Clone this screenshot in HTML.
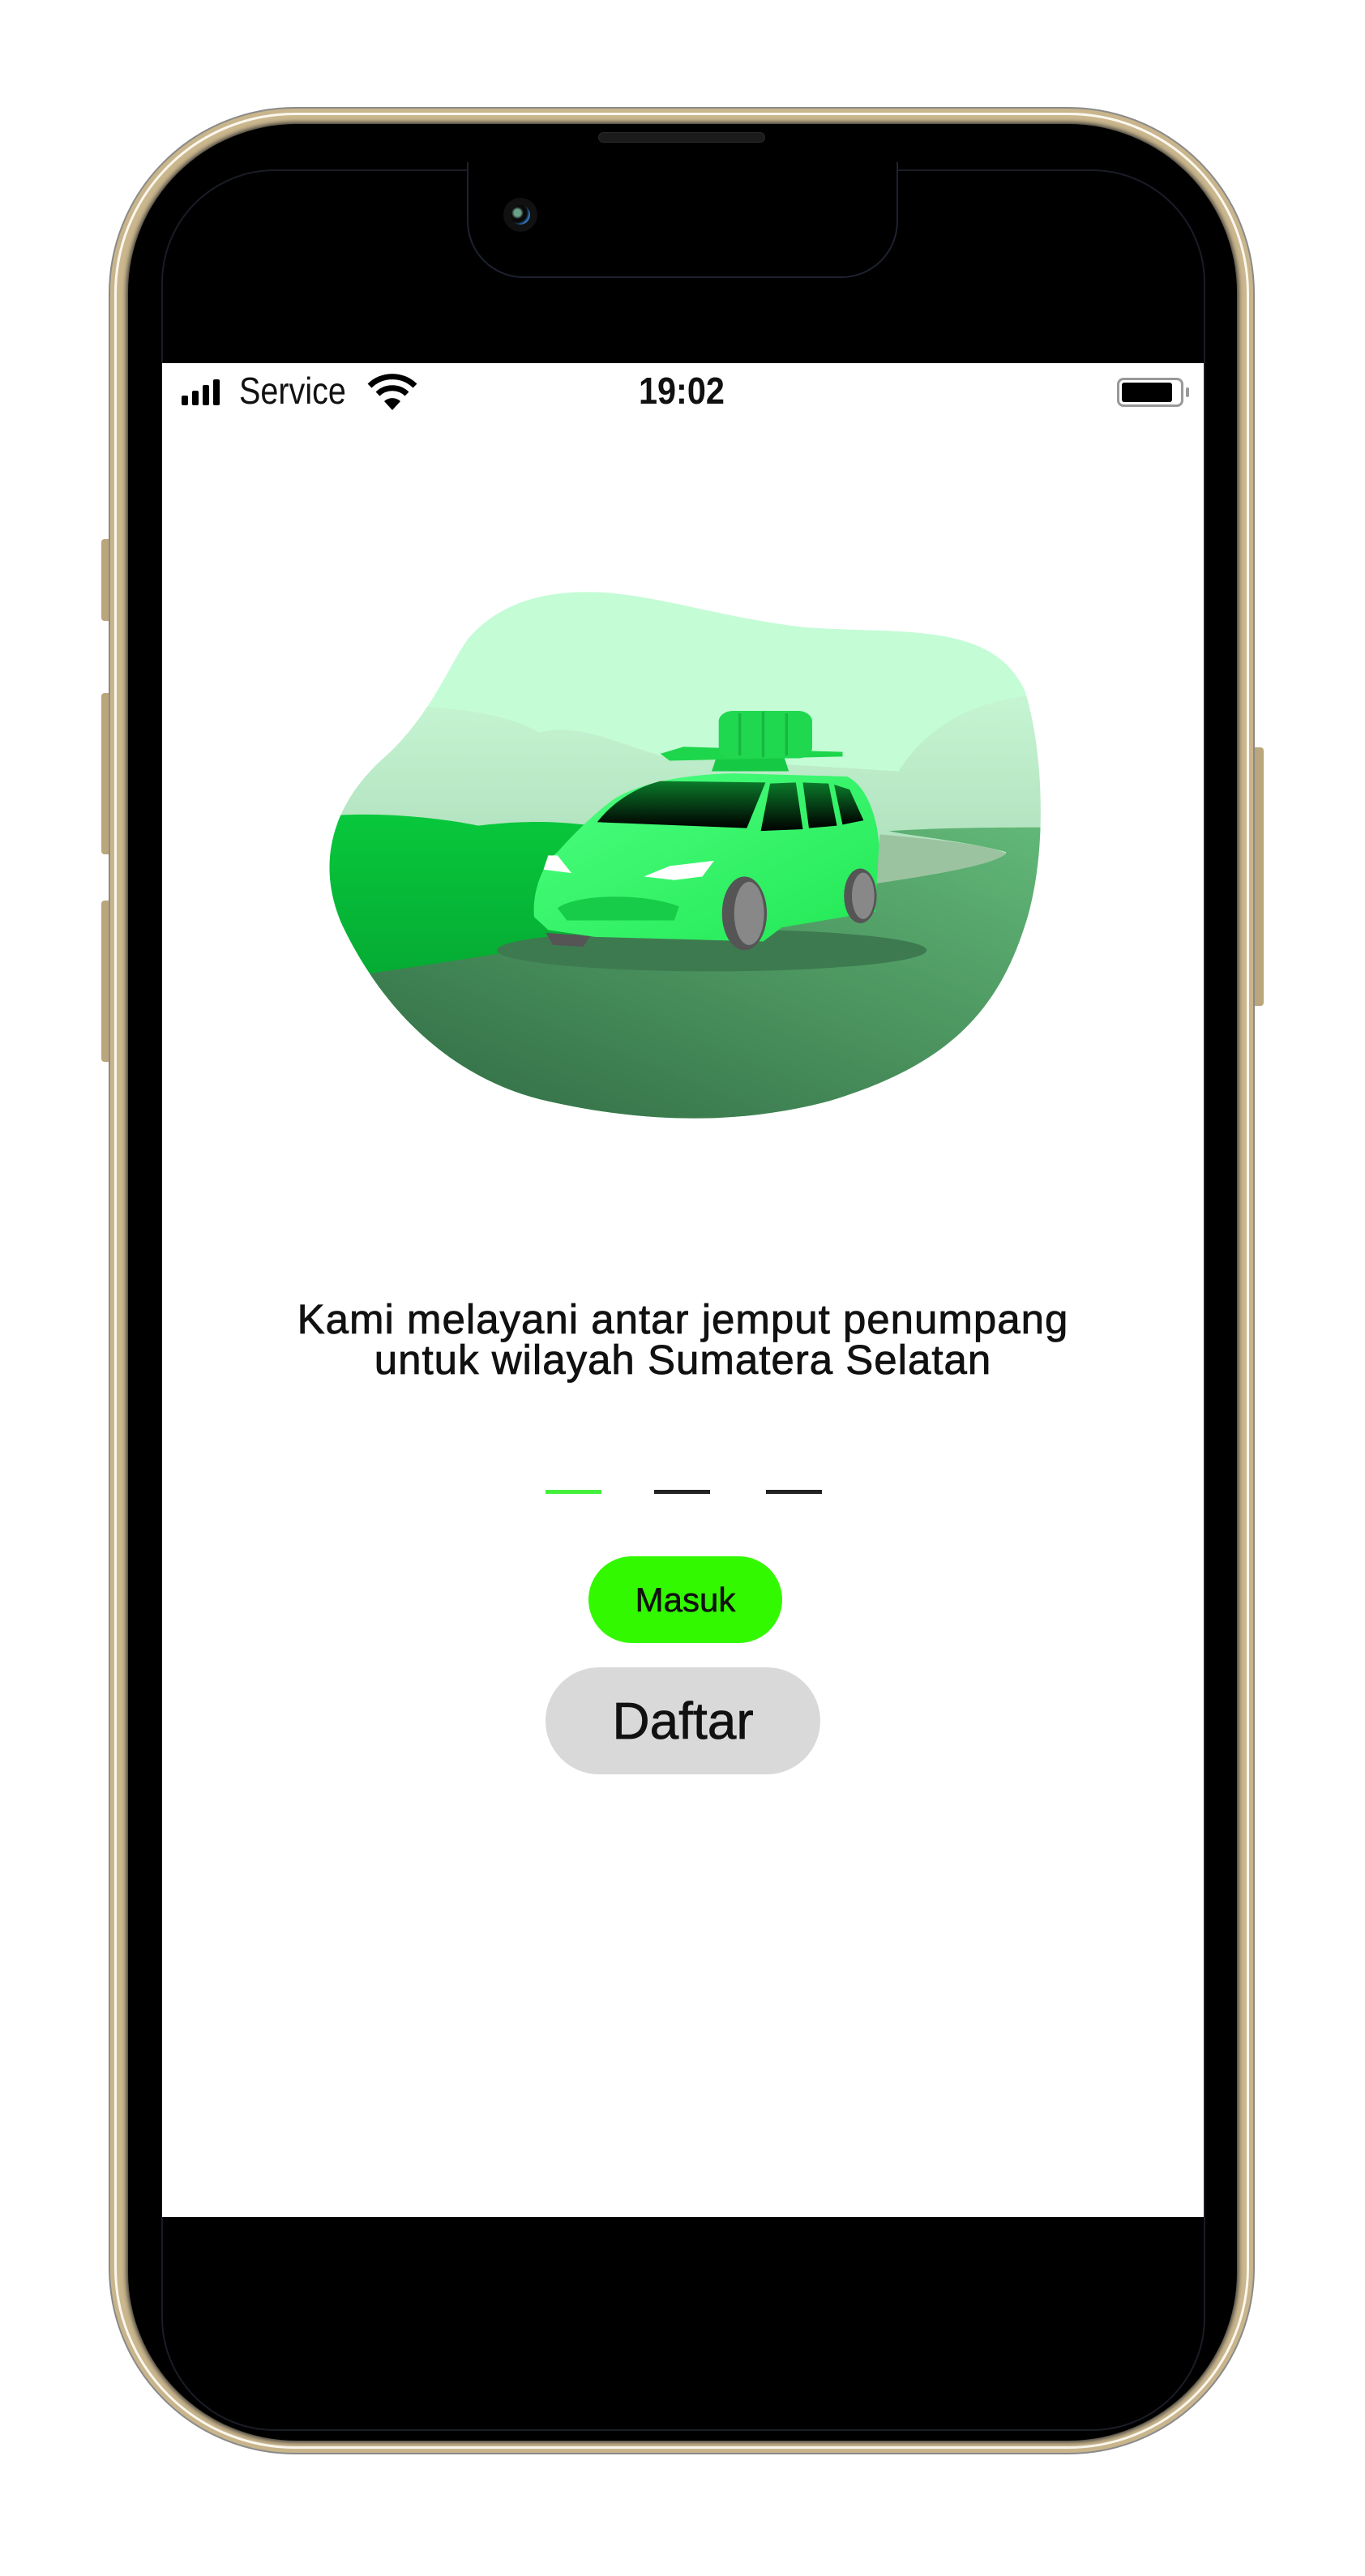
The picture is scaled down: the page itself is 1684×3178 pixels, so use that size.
<!DOCTYPE html>
<html><head><meta charset="utf-8">
<style>
*{margin:0;padding:0;box-sizing:border-box}
html,body{width:1684px;height:3178px;background:#fff;overflow:hidden;font-family:"Liberation Sans",sans-serif}
.abs{position:absolute}
.txt{position:absolute;left:200px;width:1285px;text-align:center;font-size:51px;line-height:50px;color:#111;-webkit-text-stroke:0.8px #111;letter-spacing:1px}
</style></head><body>
<!-- side buttons -->
<div class="abs" style="left:125px;top:665px;width:14px;height:101px;background:#b9a67d;border-radius:4px"></div>
<div class="abs" style="left:125px;top:855px;width:14px;height:199px;background:#b9a67d;border-radius:4px"></div>
<div class="abs" style="left:125px;top:1111px;width:14px;height:199px;background:#b9a67d;border-radius:4px"></div>
<div class="abs" style="left:1545px;top:922px;width:14px;height:319px;background:#b9a67d;border-radius:4px"></div>
<!-- frame -->
<div class="abs" style="left:134px;top:132px;width:1414px;height:2896px;border-radius:230px;background:#c9b58c;border:2px solid #8a8a8a"></div>
<div class="abs" style="left:141px;top:139px;width:1400px;height:2882px;border-radius:223px;background:#cbb78e;border:3px solid #fbf7ee"></div>
<div class="abs" style="left:158px;top:153px;width:1368px;height:2858px;border-radius:208px;background:#000;box-shadow:0 0 6px 2px #333"></div>
<div class="abs" style="left:199px;top:209px;width:1288px;height:2790px;border-radius:140px;border:2px solid #1a1d26"></div>
<!-- notch -->
<div class="abs" style="left:576px;top:200px;width:532px;height:143px;background:#000;border:2px solid #1e2230;border-top:none;border-radius:0 0 70px 70px"></div>
<div class="abs" style="left:738px;top:163px;width:206px;height:13px;border-radius:7px;background:#1b1b1b;border:1px solid #2a2a2a"></div>
<div class="abs" style="left:621px;top:244px;width:42px;height:42px;border-radius:50%;background:#111"></div>
<div class="abs" style="left:630px;top:253px;width:24px;height:24px;border-radius:50%;background:radial-gradient(circle at 35% 40%,#6aa08a 0 20%,#0a0a0a 35%,#0a0a0a 55%,#2c73b8 70%)"></div>
<!-- screen -->
<div class="abs" style="left:200px;top:448px;width:1285px;height:2287px;background:#fff"></div>
<!-- status bar -->
<svg class="abs" style="left:224px;top:466px" width="60" height="36"><rect x="0" y="22" width="8" height="12" rx="2"/><rect x="13" y="16" width="8" height="18" rx="2"/><rect x="26" y="9" width="8" height="25" rx="2"/><rect x="39" y="2" width="8" height="32" rx="2"/></svg>
<div class="abs" style="left:295px;top:456px;font-size:46px;line-height:52px;color:#111;transform:scaleX(0.86);transform-origin:left">Service</div>
<svg class="abs" style="left:452px;top:460px" width="64" height="48" viewBox="0 0 64 48"><path d="M4 16 A40 40 0 0 1 60 16" fill="none" stroke="#000" stroke-width="7"/><path d="M14 26 A26 26 0 0 1 50 26" fill="none" stroke="#000" stroke-width="7"/><path d="M32 46 L22 35 A15 15 0 0 1 42 35 Z"/></svg>
<div class="abs" style="left:788px;top:456px;font-size:46px;line-height:52px;font-weight:bold;color:#111;transform:scaleX(0.9);transform-origin:left">19:02</div>
<div class="abs" style="left:1378px;top:466px;width:82px;height:36px;border:3px solid #999;border-radius:8px;background:#fff"></div>
<div class="abs" style="left:1384px;top:472px;width:62px;height:24px;background:#000;border-radius:3px"></div>
<div class="abs" style="left:1463px;top:478px;width:4px;height:12px;background:#999;border-radius:2px"></div>
<!-- illustration -->
<svg class="abs" style="left:388px;top:709px" width="904" height="679" viewBox="0 0 1568 1568" preserveAspectRatio="none">
<defs>
<clipPath id="b"><path d="M560 50 C700 40 850 120 1050 150 C1250 170 1450 130 1520 330 C1560 500 1570 800 1520 1000 C1460 1250 1350 1400 1100 1500 C900 1570 700 1560 500 1500 C300 1440 150 1250 60 1000 C0 820 40 650 150 520 C250 400 290 250 330 180 C390 90 470 55 560 50 Z"/></clipPath>
<linearGradient id="m" x1="0" y1="0" x2="0" y2="1"><stop offset="0" stop-color="#c6f5d3"/><stop offset="0.5" stop-color="#a8d9b5"/><stop offset="1" stop-color="#8cc79d"/></linearGradient>
<linearGradient id="h" x1="0" y1="0" x2="0" y2="1"><stop offset="0" stop-color="#08c83c"/><stop offset="1" stop-color="#02902a"/></linearGradient>
<linearGradient id="g" x1="0" y1="1" x2="1" y2="0"><stop offset="0" stop-color="#2e6640"/><stop offset="1" stop-color="#62b878"/></linearGradient>
<linearGradient id="w" x1="0" y1="0" x2="0" y2="1"><stop offset="0" stop-color="#0a7a2a"/><stop offset="1" stop-color="#000"/></linearGradient>
<linearGradient id="c" x1="0" y1="0" x2="1" y2="1"><stop offset="0" stop-color="#4dff80"/><stop offset="1" stop-color="#22e855"/></linearGradient>
</defs>
<g clip-path="url(#b)">
<rect width="1568" height="1568" fill="#c4fcd6"/>
<path d="M0 380 C200 360 400 380 480 450 C560 420 650 480 750 520 L1250 560 C1300 450 1400 350 1568 340 L1568 1568 L0 1568 Z" fill="url(#m)"/>
<path d="M0 690 C150 670 300 700 350 715 C450 700 520 700 620 720 L620 1568 L0 1568 Z" fill="url(#h)"/>
<path d="M0 1160 C400 1080 700 1020 1100 900 C1300 850 1480 820 1480 790 C1400 760 1250 740 1230 730 C1350 720 1500 720 1568 720 L1568 1568 L0 1568 Z" fill="url(#g)"/>
<path d="M1210 740 C1300 750 1450 770 1480 795 C1450 830 1300 860 1200 880 Z" fill="#9cc3a0"/>
<ellipse cx="850" cy="1070" rx="460" ry="60" fill="#3e7a50"/>
<path d="M850 560 L860 520 L1005 520 L1015 560 Z" fill="#16c944"/>
<path d="M740 510 L790 490 L1130 505 L1130 518 L760 530 Z" fill="#1ed64c"/>
<rect x="865" y="388" width="200" height="135" rx="30" fill="#1fd850"/>
<path d="M910 395 L910 515 M960 390 L960 520 M1010 395 L1010 515" stroke="#17b840" stroke-width="6"/>
<path d="M470 975 C465 900 490 820 520 790 C560 730 600 680 640 640 C700 590 800 568 900 566 L1140 575 C1185 605 1205 700 1208 770 L1200 960 L1000 1005 L960 1045 L600 1032 L500 1012 Z" fill="url(#c)"/>
<path d="M605 705 C640 645 690 605 740 588 L965 592 L925 722 Z" fill="url(#w)"/>
<path d="M975 595 L1030 592 L1045 725 L955 730 Z" fill="url(#w)"/>
<path d="M1045 592 L1100 595 L1118 715 L1058 722 Z" fill="url(#w)"/>
<path d="M1112 598 L1145 612 L1175 700 L1130 712 Z" fill="url(#w)"/>
<path d="M500 800 L520 800 L550 850 L490 840 Z" fill="#fff"/>
<path d="M705 860 L760 830 L855 815 L830 860 L770 870 Z" fill="#fff"/>
<path d="M520 950 C560 910 700 905 780 945 L770 985 L540 985 Z" fill="#16cc48"/>
<ellipse cx="920" cy="965" rx="48" ry="105" fill="#555"/>
<ellipse cx="930" cy="965" rx="32" ry="90" fill="#888"/>
<ellipse cx="1168" cy="915" rx="35" ry="78" fill="#555"/>
<ellipse cx="1174" cy="915" rx="24" ry="66" fill="#888"/>
<path d="M495 1020 L590 1030 L575 1060 L510 1055 Z" fill="#555"/>
</g>
</svg>
<!-- text -->
<div class="txt" style="top:1603px">Kami melayani antar jemput penumpang</div>
<div class="txt" style="top:1653px">untuk wilayah Sumatera Selatan</div>
<!-- dashes -->
<div class="abs" style="left:673px;top:1838px;width:69px;height:5px;background:#44f03c"></div>
<div class="abs" style="left:807px;top:1838px;width:69px;height:5px;background:#222"></div>
<div class="abs" style="left:945px;top:1838px;width:69px;height:5px;background:#222"></div>
<!-- buttons -->
<div class="abs" style="left:726px;top:1920px;width:239px;height:107px;border-radius:54px;background:#33f900;text-align:center;line-height:107px;font-size:42px;color:#111;-webkit-text-stroke:0.6px #111">Masuk</div>
<div class="abs" style="left:673px;top:2057px;width:339px;height:132px;border-radius:66px;background:#d9d9d9;text-align:center;line-height:132px;font-size:64px;color:#111;-webkit-text-stroke:0.7px #111">Daftar</div>
</body></html>
